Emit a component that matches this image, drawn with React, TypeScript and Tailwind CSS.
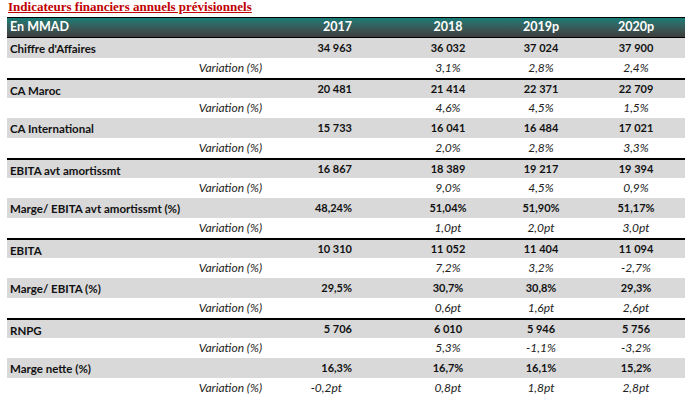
import React from "react";

type Row = { label: string; vals: string[]; varVals: string[]; line?: boolean };

const rows: Row[] = [
  { label: "Chiffre d'Affaires", vals: ["34 963", "36 032", "37 024", "37 900"], varVals: ["", "3,1%", "2,8%", "2,4%"] },
  { label: "CA Maroc", vals: ["20 481", "21 414", "22 371", "22 709"], varVals: ["", "4,6%", "4,5%", "1,5%"], line: true },
  { label: "CA International", vals: ["15 733", "16 041", "16 484", "17 021"], varVals: ["", "2,0%", "2,8%", "3,3%"] },
  { label: "EBITA avt amortissmt", vals: ["16 867", "18 389", "19 217", "19 394"], varVals: ["", "9,0%", "4,5%", "0,9%"], line: true },
  { label: "Marge/ EBITA avt amortissmt (%)", vals: ["48,24%", "51,04%", "51,90%", "51,17%"], varVals: ["", "1,0pt", "2,0pt", "3,0pt"] },
  { label: "EBITA", vals: ["10 310", "11 052", "11 404", "11 094"], varVals: ["", "7,2%", "3,2%", "-2,7%"], line: true },
  { label: "Marge/ EBITA (%)", vals: ["29,5%", "30,7%", "30,8%", "29,3%"], varVals: ["", "0,6pt", "1,6pt", "2,6pt"] },
  { label: "RNPG", vals: ["5 706", "6 010", "5 946", "5 756"], varVals: ["", "5,3%", "-1,1%", "-3,2%"], line: true },
  { label: "Marge nette (%)", vals: ["16,3%", "16,7%", "16,1%", "15,2%"], varVals: ["-0,2pt", "0,8pt", "1,8pt", "2,8pt"] },
];

const grid = "grid grid-cols-[263px_131px_94px_92px_98px] items-center";

export default function App() {
  return (
    <div className="w-[691px] h-[400px] bg-white overflow-hidden" style={{ fontFamily: "Lato, 'Liberation Sans', sans-serif" }}>
      <div
        className="h-[17px] pl-[8px] text-[13px] leading-[14px] font-bold text-[#c00000] underline underline-offset-[1px]"
        style={{ fontFamily: "'Liberation Serif', serif" }}
      >
        Indicateurs financiers annuels prévisionnels
      </div>
      <div className="ml-[7px] w-[678px]">
        <div className={`${grid} h-[21px] border-t border-b border-black bg-gradient-to-b from-[#127c77] to-[#3d3d3d] text-white font-bold text-[12.5px]`}>
          <div className="pl-[3px]">En MMAD</div>
          <div className="text-right pr-[49px]">2017</div>
          <div className="text-center">2018</div>
          <div className="text-center">2019p</div>
          <div className="text-center">2020p</div>
        </div>
        {rows.map((r, i) => (
          <React.Fragment key={i}>
            <div className={`${grid} h-[20px] bg-[#d9d9d9] font-bold text-[#111] ${r.line ? "border-t-2 border-black" : ""}`}>
              <div className="pl-[3px] pt-[2px] text-[11.5px]">{r.label}</div>
              <div className="text-right pr-[49px] text-[11px]">{r.vals[0]}</div>
              <div className="text-center text-[11px]">{r.vals[1]}</div>
              <div className="text-center text-[11px]">{r.vals[2]}</div>
              <div className="text-center text-[11px]">{r.vals[3]}</div>
            </div>
            <div className={`${grid} h-[20px] text-[12px] italic text-[#222]`}>
              <div className="text-right pr-[8px]">Variation (%)</div>
              <div className="text-right pr-[59px]">{r.varVals[0]}</div>
              <div className="text-center">{r.varVals[1]}</div>
              <div className="text-center">{r.varVals[2]}</div>
              <div className="text-center">{r.varVals[3]}</div>
            </div>
          </React.Fragment>
        ))}
      </div>
    </div>
  );
}
